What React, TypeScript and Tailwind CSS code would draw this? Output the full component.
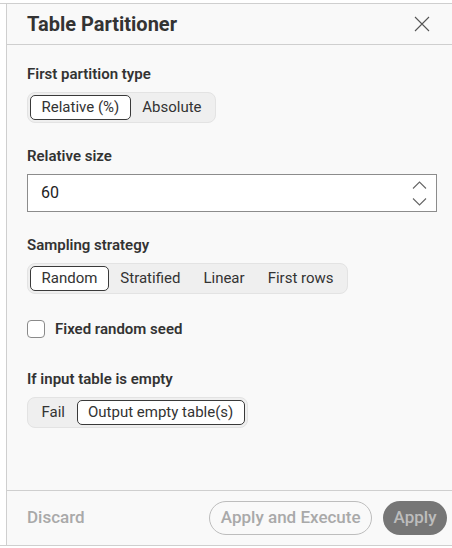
import { useState } from 'react'

type SegmentProps = {
  options: string[]
  value: string
  onChange: (v: string) => void
}

const Segmented = ({ options, value, onChange }: SegmentProps) => {
  return (
    <div className="inline-flex items-stretch h-[31px] p-[2px] rounded-lg border border-[#e3e3e3] bg-[#efefef]">
      {options.map((opt) => (
        <button
          key={opt}
          onClick={() => onChange(opt)}
          className={
            opt === value
              ? 'px-[10.5px] rounded-[5px] border border-[#3a3a3a] bg-white text-[15px] text-[#333] leading-none'
              : 'px-[10.5px] rounded-[5px] border border-transparent text-[15px] text-[#333] leading-none'
          }
        >
          {opt}
        </button>
      ))}
    </div>
  )
}

const Label = ({ children }: { children: React.ReactNode }) => (
  <div className="text-[15px] leading-[20px] font-semibold text-[#333] mb-2">{children}</div>
)

export default function App() {
  const [partType, setPartType] = useState('Relative (%)')
  const [size, setSize] = useState('60')
  const [strategy, setStrategy] = useState('Random')
  const [seed, setSeed] = useState(false)
  const [empty, setEmpty] = useState('Output empty table(s)')

  return (
    <div
      className="w-[452px] h-[548px] bg-white pt-[3px]"
      style={{ fontFamily: 'Roboto, "Noto Sans", sans-serif' }}
    >
      <div className="h-[543px] border-t border-b border-[#cfcfcf] flex">
        <div className="w-[6px] bg-white" />
        <div className="flex-1 flex flex-col border-l border-[#cfcfcf] bg-[#f9f9f9]">
          {/* Header */}
          <div className="h-[41px] border-b border-[#cfcfcf] flex items-center justify-between pl-5 pr-[22px]">
            <h1 className="text-[20px] font-bold text-[#333] leading-none">Table Partitioner</h1>
            <button className="text-[#555]" aria-label="Close">
              <svg width="16" height="16" viewBox="0 0 16 16" fill="none" stroke="currentColor" strokeWidth="1.1">
                <path d="M1 1l14 14M15 1L1 15" />
              </svg>
            </button>
          </div>

          {/* Content */}
          <div className="flex-1 pl-5 pr-[15px] pt-[19px]">
            <Label>First partition type</Label>
            <Segmented options={['Relative (%)', 'Absolute']} value={partType} onChange={setPartType} />

            <div className="mt-[23px]">
              <Label>Relative size</Label>
              <div className="flex items-center h-[38px] border border-[#8c8c8c] bg-white">
                <input
                  value={size}
                  onChange={(e) => setSize(e.target.value)}
                  className="flex-1 min-w-0 pl-[13px] text-[16px] text-[#222] bg-transparent outline-none"
                />
                <div className="flex flex-col items-center justify-center gap-[9px] w-[34px] h-full text-[#666]">
                  <svg width="15" height="8" viewBox="0 0 15 8" fill="none" stroke="currentColor" strokeWidth="1.1">
                    <path d="M1 7.5l6.5-6.5 6.5 6.5" />
                  </svg>
                  <svg width="15" height="8" viewBox="0 0 15 8" fill="none" stroke="currentColor" strokeWidth="1.1">
                    <path d="M1 0.5l6.5 6.5 6.5-6.5" />
                  </svg>
                </div>
              </div>
            </div>

            <div className="mt-[23px]">
              <Label>Sampling strategy</Label>
              <Segmented
                options={['Random', 'Stratified', 'Linear', 'First rows']}
                value={strategy}
                onChange={setStrategy}
              />
            </div>

            <label className="mt-[25px] h-[20px] flex items-center gap-[10px] cursor-pointer">
              <input
                type="checkbox"
                checked={seed}
                onChange={(e) => setSeed(e.target.checked)}
                className="appearance-none w-[18px] h-[18px] rounded-[4px] border border-[#8a8a8a] bg-white"
              />
              <span className="text-[15px] leading-[20px] font-semibold text-[#333]">Fixed random seed</span>
            </label>

            <div className="mt-[30px]">
              <Label>If input table is empty</Label>
              <Segmented
                options={['Fail', 'Output empty table(s)']}
                value={empty}
                onChange={setEmpty}
              />
            </div>
          </div>

          {/* Footer */}
          <div className="h-[55px] border-t border-[#cfcfcf] flex items-center pl-5 pr-[5px]">
            <button className="text-[17px] font-medium text-[#a9a9a9]">Discard</button>
            <div className="ml-auto flex items-center gap-[11px]">
              <button className="h-[34px] px-[10.5px] rounded-full border border-[#bdbdbd] text-[17px] font-medium text-[#a9a9a9]">
                Apply and Execute
              </button>
              <button className="h-[34px] px-[10.5px] rounded-full bg-[#767676] text-[17px] font-medium text-[#bdbdbd]">
                Apply
              </button>
            </div>
          </div>
        </div>
      </div>
    </div>
  )
}
